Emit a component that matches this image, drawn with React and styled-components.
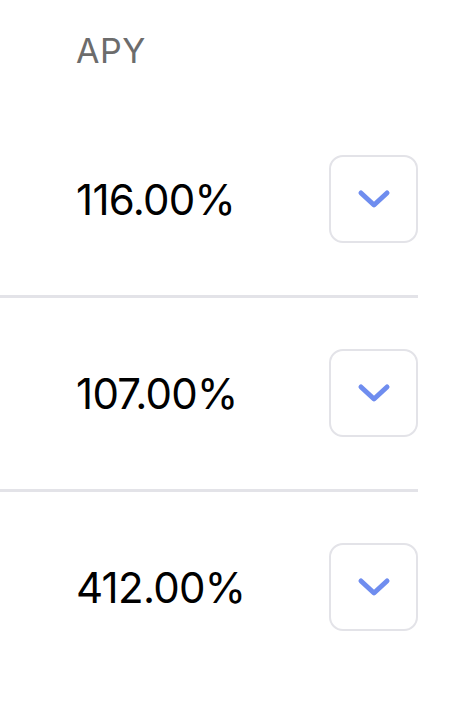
import React from 'react';
import styled, { createGlobalStyle } from 'styled-components';

const GlobalStyle = createGlobalStyle`
  html, body {
    margin: 0;
    padding: 0;
    background: #ffffff;
  }
  body {
    font-family: Inter, "Noto Sans", sans-serif;
  }
`;

const Wrapper = styled.div`
  width: 418px;
  display: flex;
  flex-direction: column;
`;

const Header = styled.div`
  height: 104px;
  padding-left: 76px;
  box-sizing: border-box;
  display: flex;
  align-items: center;
`;

const Label = styled.span`
  font-size: 34px;
  color: #6c6c6c;
  letter-spacing: 0.5px;
  margin-top: -3px;
`;

const Row = styled.div`
  display: flex;
  align-items: center;
  justify-content: space-between;
  padding: 51px 0 52px 76px;
  border-bottom: ${(p) => (p.last ? 'none' : '3px solid #e3e3e8')};
`;

const Value = styled.span`
  font-size: 42px;
  color: #000000;
  letter-spacing: -0.7px;
`;

const ToggleButton = styled.button`
  width: 89px;
  height: 88px;
  border: 2px solid #e3e3e8;
  border-radius: 14px;
  background: #ffffff;
  display: flex;
  align-items: center;
  justify-content: center;
  padding: 0;
  box-sizing: border-box;
  cursor: pointer;
`;

const Chevron = () => (
  <svg width="36" height="22" viewBox="0 0 36 22" fill="none">
    <path
      d="M5 5 L18 17 L31 5"
      stroke="#6f8def"
      strokeWidth="5"
      strokeLinecap="round"
      strokeLinejoin="round"
    />
  </svg>
);

const rows = ['116.00%', '107.00%', '412.00%'];

export default function App() {
  return (
    <Wrapper>
      <GlobalStyle />
      <Header>
        <Label>APY</Label>
      </Header>
      {rows.map((apy, i) => (
        <Row key={i} last={i === rows.length - 1}>
          <Value>{apy}</Value>
          <ToggleButton>
            <Chevron />
          </ToggleButton>
        </Row>
      ))}
    </Wrapper>
  );
}
